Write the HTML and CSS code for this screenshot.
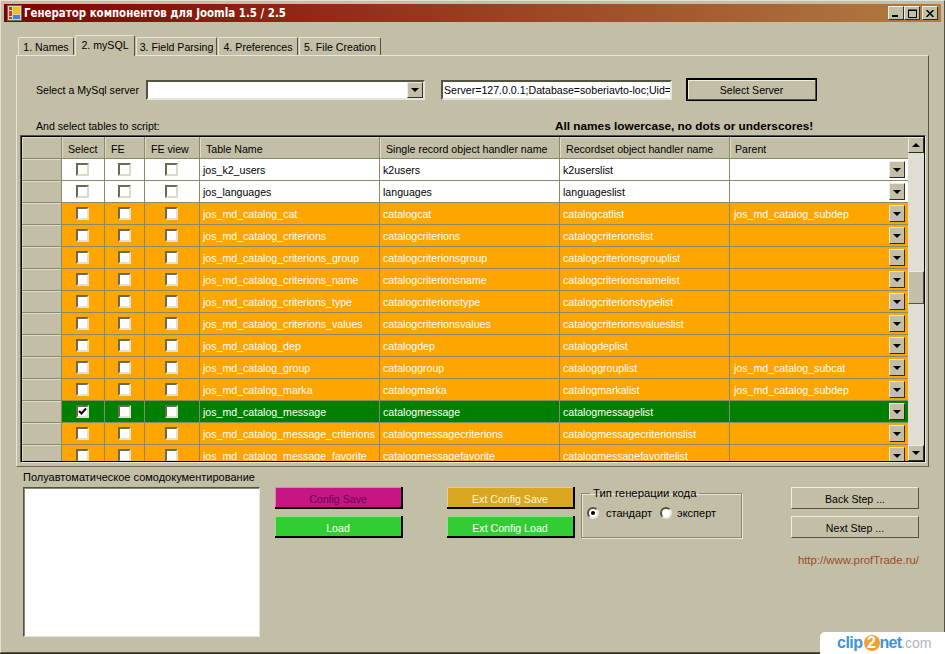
FILE: index.html
```html
<!DOCTYPE html>
<html lang="ru">
<head>
<meta charset="utf-8">
<title>Генератор компонентов для Joomla 1.5 / 2.5</title>
<link rel="stylesheet" href="styles.css">
</head>
<body>
<div class="window">
  <header class="titlebar">
    <svg class="app-icon" width="16" height="16" viewBox="0 0 16 16"><rect x="0.5" y="0.5" width="14" height="15" fill="#d8d4c0" stroke="#6a6a60"/><rect x="2" y="2" width="3" height="3" fill="#b04838"/><rect x="6" y="2" width="7" height="7" fill="#f0c020"/><rect x="2" y="6" width="3" height="5" fill="#d03828"/><rect x="2" y="12" width="3" height="2" fill="#b04838"/><rect x="6" y="10" width="7" height="4" fill="#4a80d8"/></svg>
    <span class="title-text">Генератор компонентов для Joomla 1.5 / 2.5</span>
    <div class="win-buttons">
      <button class="win-btn"><svg width="8" height="7" viewBox="0 0 8 7"><rect x="0" y="5" width="6" height="2" fill="#000"/></svg></button>
      <button class="win-btn"><svg width="9" height="9" viewBox="0 0 9 9"><path d="M0.5 1.5H8.5V8.5H0.5Z M0 1H9" fill="none" stroke="#000"/></svg></button>
      <button class="win-btn win-close"><svg width="8" height="7" viewBox="0 0 8 7"><path d="M0.5 0L7.5 7M7.5 0L0.5 7" stroke="#000" stroke-width="1.5"/></svg></button>
    </div>
  </header>

  <div class="main">
    <nav class="tabs">
      <span class="tab tab-1">1. Names</span>
      <span class="tab tab-2 active">2. mySQL</span>
      <span class="tab tab-3">3. Field Parsing</span>
      <span class="tab tab-4">4. Preferences</span>
      <span class="tab tab-5">5. File Creation</span>
    </nav>

    <section class="panel">
      <div class="server-row">
        <label class="server-label">Select a MySql server</label>
        <div class="combo"><span class="drop-btn"><i class="tri"></i></span></div>
        <div class="conn">Server=127.0.0.1;Database=soberiavto-loc;Uid=</div>
        <button class="btn btn-default">Select Server</button>
      </div>
      <div class="hint-row">
        <span>And select tables to script:</span>
        <strong class="hint-bold">All names lowercase, no dots or underscores!</strong>
      </div>

      <div class="grid">
        <div class="grid-body">
          <div class="row head">
            <div class="rh"></div><div class="c">Select</div><div class="c">FE</div><div class="c">FE view</div><div class="c">Table Name</div><div class="c">Single record object handler name</div><div class="c">Recordset object handler name</div><div class="c last">Parent</div>
          </div>
          <div class="row white">
            <div class="rh"></div><div class="c chk"><i class="cb"></i></div><div class="c chk"><i class="cb"></i></div><div class="c chk"><i class="cb"></i></div><div class="c">jos_k2_users</div><div class="c">k2users</div><div class="c">k2userslist</div><div class="c last"><span class="val"></span><span class="drop-btn"><i class="tri"></i></span></div>
          </div>
          <div class="row white">
            <div class="rh"></div><div class="c chk"><i class="cb"></i></div><div class="c chk"><i class="cb"></i></div><div class="c chk"><i class="cb"></i></div><div class="c">jos_languages</div><div class="c">languages</div><div class="c">languageslist</div><div class="c last"><span class="val"></span><span class="drop-btn"><i class="tri"></i></span></div>
          </div>
          <div class="row orange">
            <div class="rh"></div><div class="c chk"><i class="cb"></i></div><div class="c chk"><i class="cb"></i></div><div class="c chk"><i class="cb"></i></div><div class="c">jos_md_catalog_cat</div><div class="c">catalogcat</div><div class="c">catalogcatlist</div><div class="c last"><span class="val">jos_md_catalog_subdep</span><span class="drop-btn"><i class="tri"></i></span></div>
          </div>
          <div class="row orange">
            <div class="rh"></div><div class="c chk"><i class="cb"></i></div><div class="c chk"><i class="cb"></i></div><div class="c chk"><i class="cb"></i></div><div class="c">jos_md_catalog_criterions</div><div class="c">catalogcriterions</div><div class="c">catalogcriterionslist</div><div class="c last"><span class="val"></span><span class="drop-btn"><i class="tri"></i></span></div>
          </div>
          <div class="row orange">
            <div class="rh"></div><div class="c chk"><i class="cb"></i></div><div class="c chk"><i class="cb"></i></div><div class="c chk"><i class="cb"></i></div><div class="c">jos_md_catalog_criterions_group</div><div class="c">catalogcriterionsgroup</div><div class="c">catalogcriterionsgrouplist</div><div class="c last"><span class="val"></span><span class="drop-btn"><i class="tri"></i></span></div>
          </div>
          <div class="row orange">
            <div class="rh"></div><div class="c chk"><i class="cb"></i></div><div class="c chk"><i class="cb"></i></div><div class="c chk"><i class="cb"></i></div><div class="c">jos_md_catalog_criterions_name</div><div class="c">catalogcriterionsname</div><div class="c">catalogcriterionsnamelist</div><div class="c last"><span class="val"></span><span class="drop-btn"><i class="tri"></i></span></div>
          </div>
          <div class="row orange">
            <div class="rh"></div><div class="c chk"><i class="cb"></i></div><div class="c chk"><i class="cb"></i></div><div class="c chk"><i class="cb"></i></div><div class="c">jos_md_catalog_criterions_type</div><div class="c">catalogcriterionstype</div><div class="c">catalogcriterionstypelist</div><div class="c last"><span class="val"></span><span class="drop-btn"><i class="tri"></i></span></div>
          </div>
          <div class="row orange">
            <div class="rh"></div><div class="c chk"><i class="cb"></i></div><div class="c chk"><i class="cb"></i></div><div class="c chk"><i class="cb"></i></div><div class="c">jos_md_catalog_criterions_values</div><div class="c">catalogcriterionsvalues</div><div class="c">catalogcriterionsvalueslist</div><div class="c last"><span class="val"></span><span class="drop-btn"><i class="tri"></i></span></div>
          </div>
          <div class="row orange">
            <div class="rh"></div><div class="c chk"><i class="cb"></i></div><div class="c chk"><i class="cb"></i></div><div class="c chk"><i class="cb"></i></div><div class="c">jos_md_catalog_dep</div><div class="c">catalogdep</div><div class="c">catalogdeplist</div><div class="c last"><span class="val"></span><span class="drop-btn"><i class="tri"></i></span></div>
          </div>
          <div class="row orange">
            <div class="rh"></div><div class="c chk"><i class="cb"></i></div><div class="c chk"><i class="cb"></i></div><div class="c chk"><i class="cb"></i></div><div class="c">jos_md_catalog_group</div><div class="c">cataloggroup</div><div class="c">cataloggrouplist</div><div class="c last"><span class="val">jos_md_catalog_subcat</span><span class="drop-btn"><i class="tri"></i></span></div>
          </div>
          <div class="row orange">
            <div class="rh"></div><div class="c chk"><i class="cb"></i></div><div class="c chk"><i class="cb"></i></div><div class="c chk"><i class="cb"></i></div><div class="c">jos_md_catalog_marka</div><div class="c">catalogmarka</div><div class="c">catalogmarkalist</div><div class="c last"><span class="val">jos_md_catalog_subdep</span><span class="drop-btn"><i class="tri"></i></span></div>
          </div>
          <div class="row green">
            <div class="rh"></div><div class="c chk"><i class="cb checked"><svg width="9" height="9" viewBox="0 0 9 9"><path d="M1 4L3.5 6.5L8 1.5" fill="none" stroke="#000" stroke-width="2"/></svg></i></div><div class="c chk"><i class="cb"></i></div><div class="c chk"><i class="cb"></i></div><div class="c">jos_md_catalog_message</div><div class="c">catalogmessage</div><div class="c">catalogmessagelist</div><div class="c last"><span class="val"></span><span class="drop-btn"><i class="tri"></i></span></div>
          </div>
          <div class="row orange">
            <div class="rh"></div><div class="c chk"><i class="cb"></i></div><div class="c chk"><i class="cb"></i></div><div class="c chk"><i class="cb"></i></div><div class="c">jos_md_catalog_message_criterions</div><div class="c">catalogmessagecriterions</div><div class="c">catalogmessagecriterionslist</div><div class="c last"><span class="val"></span><span class="drop-btn"><i class="tri"></i></span></div>
          </div>
          <div class="row orange">
            <div class="rh"></div><div class="c chk"><i class="cb"></i></div><div class="c chk"><i class="cb"></i></div><div class="c chk"><i class="cb"></i></div><div class="c">jos_md_catalog_message_favorite</div><div class="c">catalogmessagefavorite</div><div class="c">catalogmessagefavoritelist</div><div class="c last"><span class="val"></span><span class="drop-btn"><i class="tri"></i></span></div>
          </div>
        </div>
        <div class="vscroll">
          <span class="sb-btn"><i class="tri up"></i></span>
          <span class="sb-track"></span>
          <span class="sb-thumb"></span>
          <span class="sb-track grow"></span>
          <span class="sb-btn"><i class="tri"></i></span>
        </div>
      </div>
    </section>

    <div class="bottom">
      <div class="notes">
        <div class="notes-label">Полуавтоматическое сомодокументирование</div>
        <div class="notes-box"></div>
      </div>
      <div class="stack stack-config">
        <button class="btn btn-color btn-magenta">Config Save</button>
        <button class="btn btn-color btn-lime">Load</button>
      </div>
      <div class="stack stack-ext">
        <button class="btn btn-color btn-gold">Ext Config Save</button>
        <button class="btn btn-color btn-lime">Ext Config Load</button>
      </div>
      <fieldset class="gen-type">
        <legend>Тип генерации кода</legend>
        <div class="radios">
          <i class="radio on"></i><span class="radio-label label-std">стандарт</span>
          <i class="radio"></i><span class="radio-label label-exp">эксперт</span>
        </div>
      </fieldset>
      <div class="stack stack-steps">
        <button class="btn">Back Step ...</button>
        <button class="btn">Next Step ...</button>
        <a class="site-link">http://www.profTrade.ru/</a>
      </div>
    </div>
  </div>
</div>
<div class="clip-badge"><span class="cb-blue">clip</span><span class="cb-two">2</span><span class="cb-blue cb-net">net</span><span class="cb-gray">.com</span></div>
</body>
</html>
```
FILE: styles.css
```css
* { box-sizing: border-box; }
html, body { margin: 0; padding: 0; }
body {
  width: 945px;
  height: 654px;
  overflow: hidden;
  position: relative;
  background: #c3bfa6;
  font: 10.6px "Liberation Sans", Arial, sans-serif;
  color: #000;
}
.window {
  width: 945px;
  height: 653px;
  padding: 3px;
  border-top: 1px solid #e2e0d2;
  border-left: 1px solid #e2e0d2;
  border-right: 1px solid #55533f;
  border-bottom: 1px solid #55533f;
  box-shadow: 0 1px 0 #2f2e24;
  display: flex;
  flex-direction: column;
}
.titlebar {
  height: 18px;
  flex: none;
  display: flex;
  align-items: center;
  padding: 0 3px;
  background: linear-gradient(90deg, #800000 0%, #b27c42 100%);
}
.app-icon { flex: none; }
.title-text {
  margin-left: 1px;
  font-family: "DejaVu Sans", Verdana, sans-serif;
  font-stretch: condensed;
  font-weight: bold;
  font-size: 11.4px;
  color: #fff;
  white-space: nowrap;
}
.win-buttons { margin-left: auto; display: flex; }
.win-btn {
  width: 16px;
  height: 14px;
  padding: 0;
  border: 1px solid;
  border-color: #eeecdf #2f2e24 #2f2e24 #eeecdf;
  background: #c3bfa6;
  display: flex;
  align-items: center;
  justify-content: center;
}
.win-close { margin-left: 2px; }

.main { flex: 1; padding: 13px 12px 0; display: flex; flex-direction: column; }

.tabs { display: flex; height: 20px; padding-left: 2px; position: relative; z-index: 1; flex: none; }
.tab {
  height: 18px;
  margin-top: 2px;
  border: 1px solid #e8e6d8;
  border-right: 1px solid #55533f;
  border-bottom: 0;
  border-radius: 2px 2px 0 0;
  text-align: center;
  line-height: 18px;
  white-space: nowrap;
  margin-right: 1px;
}
.tab-1 { width: 56px; }
.tab-2 { width: 60px; }
.tab-3 { width: 81px; }
.tab-4 { width: 80px; }
.tab-5 { width: 82px; }
.tab.active {
  height: 21px;
  margin-top: 0;
  background: #c3bfa6;
  line-height: 18px;
}

.panel {
  flex: none;
  height: 412px;
  border: 1px solid;
  border-color: #e8e6d8 #55533f #6b6954 #e8e6d8;
  padding: 22px 2px 0 3px;
}
.server-row { display: flex; align-items: center; height: 23px; padding-left: 16px; }
.server-label { width: 109px; white-space: nowrap; margin-right: 1px; }
.combo {
  width: 279px;
  height: 20px;
  margin-top: 1px;
  background: #fff;
  border: 2px solid;
  border-color: #55533f #e8e6d8 #e8e6d8 #55533f;
  display: flex;
  justify-content: flex-end;
  align-items: center;
}
.combo .drop-btn { height: 16px; }
.conn {
  margin-left: 16px;
  margin-top: 1px;
  width: 231px;
  height: 20px;
  background: #fff;
  border: 2px solid;
  border-color: #55533f #e8e6d8 #e8e6d8 #55533f;
  line-height: 16px;
  padding-left: 1px;
  white-space: nowrap;
  overflow: hidden;
}
.btn {
  display: block;
  font: 10.6px "Liberation Sans", Arial, sans-serif;
  color: #000;
  width: 128px;
  height: 22px;
  padding: 2px 0 0;
  background: #c3bfa6;
  border: 1px solid;
  border-color: #eeecdf #55533f #55533f #eeecdf;
  text-align: center;
}
.btn-default {
  margin-left: 14px;
  width: 131px;
  height: 23px;
  padding: 0;
  border: 2px solid;
  border-color: #000 #55533f #55533f #000;
  outline: 1px solid #000;
  outline-offset: -1px;
  box-shadow: inset 1px 1px 0 #eeecdf;
}
.btn-color {
  padding-top: 3px;
  border: 0;
  border-bottom: 2px solid #000;
  border-right: 2px solid #000;
  box-shadow: inset 1px 1px 0 rgba(255,255,255,.45);
}
.btn-magenta { background: #c71585; color: #5d0a52; }
.btn-lime { background: #32cd32; color: #fff; }
.btn-gold { background: #daa520; color: #fff7d8; }

.hint-row {
  height: 16px;
  margin-top: 17px;
  padding-left: 16px;
  display: flex;
  line-height: 16px;
}
.hint-row span { width: 125px; white-space: nowrap; }
.hint-bold { margin-left: 394px; font-size: 11.8px; font-weight: bold; white-space: nowrap; }

.grid {
  width: 906px;
  height: 328px;
  margin-top: 1px;
  border: 1px solid;
  border-color: #55533f #e8e6d8 #e8e6d8 #55533f;
  display: flex;
  background: #000;
  padding: 1px;
}
.grid-body { width: 886px; overflow: hidden; background: #c3bfa6; flex: none; }
.row {
  display: grid;
  grid-template-columns: 40px 43px 40px 55px 180px 180px 170px 178px;
  height: 22px;
}
.c {
  border-right: 1px solid #8b8a68;
  border-bottom: 1px solid #8b8a68;
  padding: 1px 0 0 3px;
  line-height: 20px;
  white-space: nowrap;
  overflow: hidden;
  display: flex;
  align-items: center;
}
.last { border-right: 0; padding: 0 3px 0 4px; justify-content: space-between; }
.val { padding-top: 1px; }
.rh {
  background: #c3bfa6;
  border-right: 1px solid #8b8a68;
  border-bottom: 1px solid #8b8a68;
  box-shadow: inset 1px 1px 0 #dedccb;
}
.head .c {
  background: #c3bfa6;
  padding: 2px 0 0 6px;
  box-shadow: inset 1px 1px 0 #dedccb;
}
.head .c.last { padding-left: 5px; }
.chk { justify-content: center; padding: 0 1px 0 0; }
.white .c { background: #fff; color: #000; }
.orange .c { background: #ffa500; color: #fff; }
.green .c { background: #008000; color: #fff; }

.cb {
  width: 13px;
  height: 13px;
  display: flex;
  align-items: center;
  justify-content: center;
  background: #fff;
  border: 2px solid;
  border-color: #6b6954 #e2e0d2 #e2e0d2 #6b6954;
}
.white .cb { border-color: #6b6954 #dcdac8 #dcdac8 #6b6954; }
.cb svg { flex: none; }

.drop-btn {
  flex: none;
  width: 16px;
  height: 17px;
  display: flex;
  align-items: center;
  justify-content: center;
  background: #c3bfa6;
  border: 1px solid;
  border-color: #eeecdf #2f2e24 #2f2e24 #eeecdf;
}
.tri {
  display: block;
  width: 0;
  height: 0;
  border-left: 4px solid transparent;
  border-right: 4px solid transparent;
  border-top: 4px solid #000;
}
.tri.up { border-top: 0; border-bottom: 4px solid #000; }

.vscroll { flex: 1; display: flex; flex-direction: column; background: #e0ded2; }
.sb-btn {
  flex: none;
  height: 16px;
  display: flex;
  align-items: center;
  justify-content: center;
  background: #c3bfa6;
  border: 1px solid;
  border-color: #eeecdf #2f2e24 #2f2e24 #eeecdf;
}
.sb-track { height: 118px; flex: none; }
.sb-track.grow { flex: 1; height: auto; }
.sb-thumb {
  flex: none;
  height: 33px;
  background: #c3bfa6;
  border: 1px solid;
  border-color: #eeecdf #55533f #55533f #eeecdf;
}

.bottom { flex: 1; display: flex; align-items: flex-start; padding-left: 7px; }
.notes { width: 237px; padding-top: 3px; }
.notes-label { height: 17px; line-height: 15px; font-size: 11px; white-space: nowrap; }
.notes-box {
  height: 150px;
  background: #fff;
  border: 1px solid;
  border-color: #55533f #e8e6d8 #e8e6d8 #55533f;
  box-shadow: inset 1px 1px 0 #8a8870;
}
.stack { display: flex; flex-direction: column; gap: 7px; padding-top: 20px; }
.stack-config { margin-left: 15px; }
.stack-ext { margin-left: 44px; }
.stack-steps { margin-left: 49px; }
.gen-type {
  margin: 19px 0 0 6px;
  padding: 0 0 0 5px;
  width: 161px;
  height: 52px;
  border: 1px solid #8a8870;
  box-shadow: 1px 1px 0 #e8e6d8, inset 1px 1px 0 #e8e6d8;
  font-size: 11px;
}
.gen-type legend { padding: 0 3px; margin-left: 3px; line-height: 14px; font-size: 11.3px; }
.radios { display: flex; align-items: center; margin-top: 7px; }
.radio {
  width: 12px;
  height: 12px;
  border-radius: 50%;
  background: #fff;
  border: 2px solid;
  border-color: #55533f #e8e6d8 #e8e6d8 #55533f;
  display: flex;
  align-items: center;
  justify-content: center;
  flex: none;
}
.radio.on::after {
  content: "";
  width: 4px;
  height: 4px;
  border-radius: 50%;
  background: #000;
}
.radio-label { white-space: nowrap; }
.label-std { margin: 0 8px 0 7px; }
.label-exp { margin-left: 5px; }
.site-link { color: #9c4a2c; font-size: 11.4px; text-align: right; margin-top: 9px; white-space: nowrap; }

.clip-badge {
  position: absolute;
  right: 0;
  bottom: 0;
  width: 125px;
  height: 22px;
  background: #fff;
  border-radius: 5px 0 0 0;
  padding-left: 17px;
  display: flex;
  align-items: center;
  font: bold 16px "Liberation Sans", Arial, sans-serif;
  letter-spacing: -0.5px;
  white-space: nowrap;
}
.cb-blue { color: #3f92d8; }
.cb-net { letter-spacing: -0.8px; }
.cb-two {
  width: 16px;
  height: 16px;
  border-radius: 50%;
  background: #f0a030;
  color: #fff;
  text-align: center;
  line-height: 16px;
  letter-spacing: 0;
  margin: 0 0 0 1px;
}
.cb-gray { color: #adb6be; font-size: 14px; font-weight: normal; letter-spacing: 0; }
```
